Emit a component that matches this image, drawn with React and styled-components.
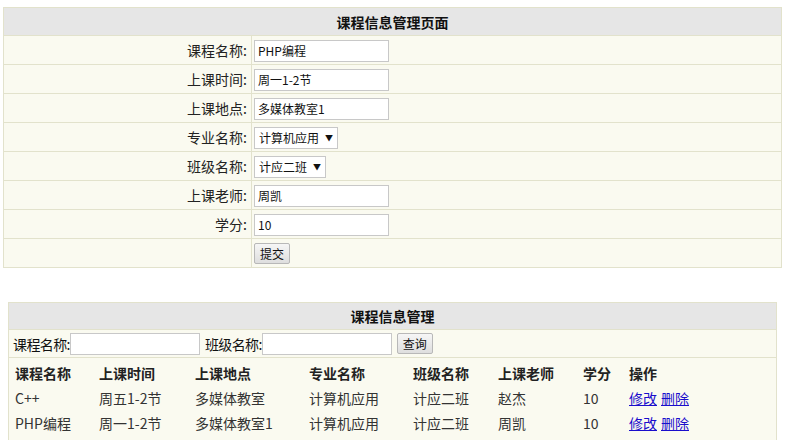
import React from "react"
import styled, { createGlobalStyle } from "styled-components"

const GlobalStyle = createGlobalStyle`
  body {
    margin: 0;
    background: #fff;
    font-family: "Microsoft YaHei", "Noto Sans CJK SC", "Noto Sans", sans-serif;
    color: #222;
  }
`

const Page = styled.div`
  padding: 7px 9px 0 3px;
  display: flex;
  flex-direction: column;
`

const FormTable = styled.table`
  width: 779px;
  border-collapse: collapse;
  border: 1px solid #e2e2cc;
  background: #fafaf0;
  font-size: 14px;

  th {
    background: #e6e6e6;
    height: 25px;
    font-size: 14px;
    font-weight: bold;
    color: #111;
    border-bottom: 1px solid #e2e2cc;
  }

  td {
    height: 28px;
    border-top: 1px solid #e2e2cc;
    padding: 0;
  }
`

const Label = styled.td`
  width: 243px;
  text-align: right;
  padding-right: 4px !important;
  border-right: 1px solid #e2e2cc;
`

const Field = styled.td`
  padding-left: 2px !important;
`

const TextInput = styled.input`
  box-sizing: border-box;
  width: ${p => p.$w || 135}px;
  height: 22px;
  border: 1px solid #c8c8c8;
  padding: 1px 3px;
  font-family: "SimSun", "Noto Sans CJK SC", sans-serif;
  font-size: 12px;
  color: #111;
  background: #fff;
  vertical-align: middle;
`

const SelectWrap = styled.span`
  position: relative;
  display: inline-block;
  vertical-align: middle;

  &::after {
    content: "▼";
    position: absolute;
    right: 5px;
    top: 5px;
    font-size: 8px;
    color: #111;
    pointer-events: none;
  }
`

const Select = styled.select`
  appearance: none;
  height: 22px;
  border: 1px solid #c8c8c8;
  font-family: "SimSun", "Noto Sans CJK SC", sans-serif;
  font-size: 12px;
  color: #111;
  background: #fff;
  padding: 0 17px 0 4px;
`

const Button = styled.button`
  height: 21px;
  padding: 0 5px;
  border: 1px solid #b8b8b8;
  border-radius: 2px;
  background: linear-gradient(#f6f6f6, #dedede);
  font-family: "SimSun", "Noto Sans CJK SC", sans-serif;
  font-size: 12px;
  color: #111;
  vertical-align: middle;
`

const ListBox = styled.div`
  margin: 34px 0 0 5px;
  width: 767px;
  border: 1px solid #e2e2cc;
  background: #fafaf0;
  font-size: 14px;
  padding-bottom: 20px;
`

const ListTitle = styled.div`
  height: 26px;
  background: #e6e6e6;
  display: flex;
  align-items: center;
  justify-content: center;
  font-weight: bold;
  color: #111;
  border-bottom: 1px solid #e2e2cc;
`

const SearchBar = styled.div`
  height: 27px;
  display: flex;
  align-items: center;
  padding-left: 4px;
  border-bottom: 1px solid #e2e2cc;
  color: #111;

  span { margin-left: 5px; letter-spacing: -0.6px; }
  span:first-child { margin-left: 0; }
  button { margin-left: 5px; }
`

const DataTable = styled.table`
  border-collapse: separate;
  border-spacing: 0;
  margin: 2px 0 0 2px;
  font-family: "Noto Sans CJK SC", sans-serif;
  font-size: 14px;

  th {
    text-align: left;
    font-weight: bold;
    height: 25px;
    padding: 0 0 0 4px;
    color: #222;
  }

  td {
    height: 25px;
    padding: 0 0 0 4px;
    color: #333;
  }

  a {
    color: #1a0dcc;
    text-decoration: underline;
    margin-right: 4px;
  }
`

const fields = [
  ["课程名称:", "PHP编程"],
  ["上课时间:", "周一1-2节"],
  ["上课地点:", "多媒体教室1"],
]

const cols = [
  ["课程名称", 80],
  ["上课时间", 92],
  ["上课地点", 110],
  ["专业名称", 100],
  ["班级名称", 81],
  ["上课老师", 81],
  ["学分", 42],
  ["操作", 80],
]

const rows = [
  ["C++", "周五1-2节", "多媒体教室", "计算机应用", "计应二班", "赵杰", "10"],
  ["PHP编程", "周一1-2节", "多媒体教室1", "计算机应用", "计应二班", "周凯", "10"],
]

export default function App() {
  return (
    <Page>
      <GlobalStyle />
      <FormTable>
        <thead>
          <tr><th colSpan={2}>课程信息管理页面</th></tr>
        </thead>
        <tbody>
          {fields.map(([l, v]) => (
            <tr key={l}>
              <Label>{l}</Label>
              <Field><TextInput defaultValue={v} /></Field>
            </tr>
          ))}
          <tr>
            <Label>专业名称:</Label>
            <Field>
              <SelectWrap>
                <Select defaultValue="a"><option value="a">计算机应用</option></Select>
              </SelectWrap>
            </Field>
          </tr>
          <tr>
            <Label>班级名称:</Label>
            <Field>
              <SelectWrap>
                <Select defaultValue="a"><option value="a">计应二班</option></Select>
              </SelectWrap>
            </Field>
          </tr>
          <tr>
            <Label>上课老师:</Label>
            <Field><TextInput defaultValue="周凯" /></Field>
          </tr>
          <tr>
            <Label>学分:</Label>
            <Field><TextInput defaultValue="10" /></Field>
          </tr>
          <tr>
            <Label />
            <Field><Button>提交</Button></Field>
          </tr>
        </tbody>
      </FormTable>

      <ListBox>
        <ListTitle>课程信息管理</ListTitle>
        <SearchBar>
          <span>课程名称:</span><TextInput $w={130} />
          <span>班级名称:</span><TextInput $w={130} />
          <Button>查询</Button>
        </SearchBar>
        <DataTable>
          <thead>
            <tr>
              {cols.map(([c, w]) => <th key={c} style={{ width: w }}>{c}</th>)}
            </tr>
          </thead>
          <tbody>
            {rows.map(r => (
              <tr key={r[0]}>
                {r.map((c, i) => <td key={i}>{c}</td>)}
                <td><a href="#">修改</a><a href="#">删除</a></td>
              </tr>
            ))}
          </tbody>
        </DataTable>
      </ListBox>
    </Page>
  )
}
